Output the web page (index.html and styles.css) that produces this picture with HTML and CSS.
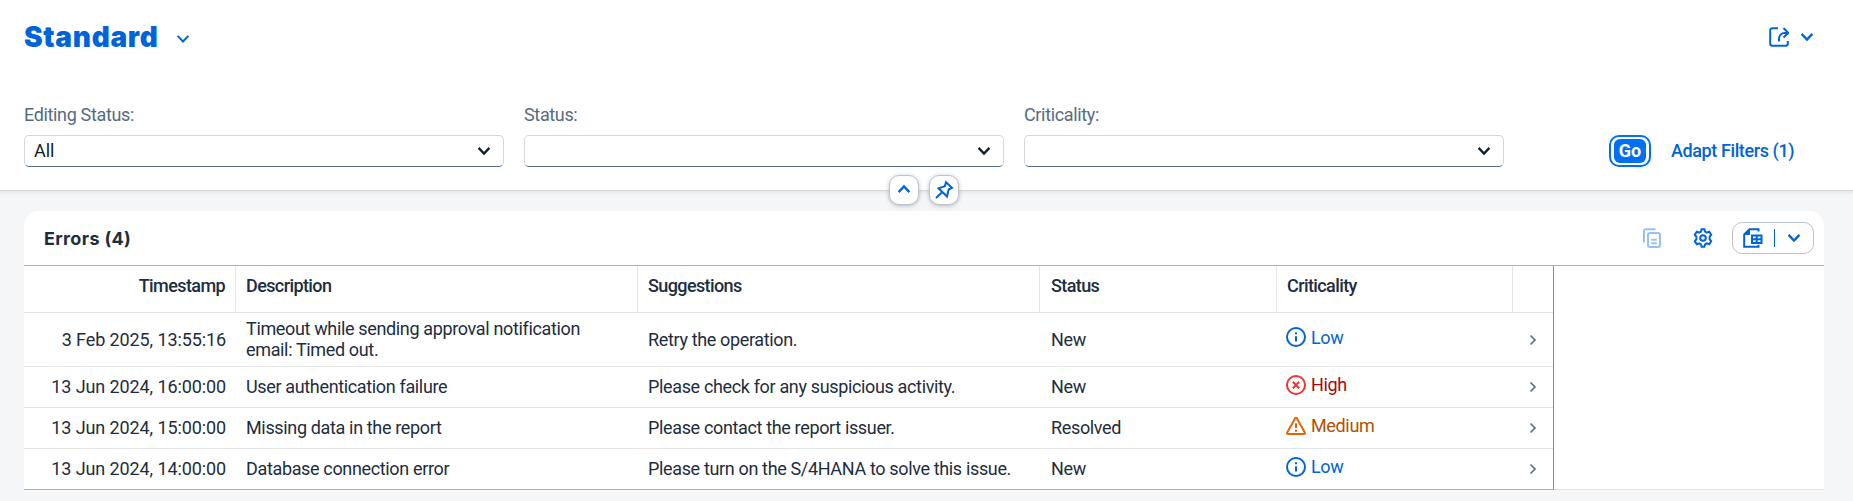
FILE: index.html
```html
<!DOCTYPE html>
<html lang="en">
<head>
<meta charset="utf-8">
<title>Errors</title>
<link rel="stylesheet" href="styles.css">
</head>
<body>
<svg class="defs" width="0" height="0">
  <symbol id="down" viewBox="0 0 14 10"><path d="M1.600 1.900L7 7.500l5.400-5.600"/></symbol>
  <symbol id="next" viewBox="0 0 8 12"><path d="M1.5 1.5L6 6l-4.5 4.5"/></symbol>
  <symbol id="info" viewBox="0 0 20 20"><circle cx="10" cy="10" r="9"/><path d="M10 9.3v5.2M10 5.2v2"/></symbol>
  <symbol id="error" viewBox="0 0 20 20"><circle cx="10" cy="10" r="9"/><path d="M6.800 6.800l6.400 6.400M13.200 6.800l-6.400 6.400"/></symbol>
  <symbol id="warning" viewBox="0 0 20 20"><path d="M9.200 2.200a1 1 0 0 1 1.600 0L18.800 16.500a1 1 0 0 1-.8 1.500H2a1 1 0 0 1-.8-1.500zM10 7.200v5M10 13.700v2"/></symbol>
</svg>
<header class="page-header">
  <div class="title-bar">
    <div class="variant"><h1 class="variant-name">Standard</h1><svg class="icon chevron thin"><use href="#down"/></svg></div>
    <div class="share">
      <svg class="icon i20" viewBox="0 0 20 20"><path d="M9 1.2H3.2a2 2 0 0 0-2 2v13.6a2 2 0 0 0 2 2h13.6a2 2 0 0 0 2-2V14M10 14.500v-3a5.5 5.5 0 0 1 5.5-5.5h3.2M14.5 1l4.8 5-4.8 4.4"/></svg>
      <svg class="icon chevron"><use href="#down"/></svg>
    </div>
  </div>
  <div class="filters">
    <div class="field"><label class="label">Editing Status:</label><div class="select"><span class="value">All</span><svg class="icon chevron"><use href="#down"/></svg></div></div>
    <div class="field"><label class="label">Status:</label><div class="select"><span></span><svg class="icon chevron"><use href="#down"/></svg></div></div>
    <div class="field"><label class="label">Criticality:</label><div class="select"><span></span><svg class="icon chevron"><use href="#down"/></svg></div></div>
    <div class="actions"><button class="go"><span class="go-inner">Go</span></button><button class="adapt">Adapt Filters (1)</button></div>
  </div>
  <div class="header-toggles">
    <button class="toggle"><svg class="icon chevron up"><use href="#down"/></svg></button>
    <button class="toggle"><svg class="icon i20" viewBox="0 0 20 20"><path d="M12 2.2l6 5.6-3.3 1.7-1.7 7L4.5 8.3l6.4-2.2zM8.3 12L2 18"/></svg></button>
  </div>
</header>
<main class="card">
  <div class="toolbar">
    <h2 class="table-title">Errors (4)</h2>
    <div class="tools">
      <svg class="icon i20 disabled" viewBox="0 0 20 20"><path d="M2 14.5V3.2a2 2 0 0 1 2-2h9.5"/><rect x="6" y="5" width="12" height="14" rx="2"/><path d="M9.2 11.8h5.6M9.2 15.2h5.6"/></svg>
      <svg class="icon i20 gear" viewBox="0 0 20 20"><path d="M8.600 1.200h2.800l.7 2.500 1.600.9 2.500-.9 2 3-1.600 2.100v2.400l1.600 2.100-2 3-2.500-.9-1.600.9-.7 2.500H8.600l-.7-2.500-1.600-.9-2.500.9-2-3 1.600-2.100V8.800L1.800 6.700l2-3 2.500.9 1.600-.9z"/><circle cx="10" cy="10" r="2.800"/></svg>
      <div class="export">
        <svg class="icon i20" viewBox="0 0 20 20"><path d="M15.500 3.500V1.200H6.500L1.200 6.500v12.300h14.300v-2"/><path class="corner" d="M7 1v6H1z"/><path d="M9 7.500h9.500v7.500H9zM13.700 7.500V15M9 11.200h9.500"/></svg>
        <span class="divider"></span>
        <svg class="icon chevron"><use href="#down"/></svg>
      </div>
    </div>
  </div>
  <div class="table-area">
    <div class="table">
      <div class="row head"><div class="cell end">Timestamp</div><div class="cell">Description</div><div class="cell">Suggestions</div><div class="cell">Status</div><div class="cell">Criticality</div><div class="cell"></div></div>
      <div class="row tall"><div class="cell end date">3 Feb 2025, 13:55:16</div><div class="cell"><span class="wrap">Timeout while sending approval notification<br>email: Timed out.</span></div><div class="cell">Retry the operation.</div><div class="cell">New</div><div class="cell crit low"><svg class="icon i20"><use href="#info"/></svg>Low</div><div class="cell nav"><svg class="next"><use href="#next"/></svg></div></div>
      <div class="row"><div class="cell end date">13 Jun 2024, 16:00:00</div><div class="cell">User authentication failure</div><div class="cell">Please check for any suspicious activity.</div><div class="cell">New</div><div class="cell crit high"><svg class="icon i20"><use href="#error"/></svg>High</div><div class="cell nav"><svg class="next"><use href="#next"/></svg></div></div>
      <div class="row"><div class="cell end date">13 Jun 2024, 15:00:00</div><div class="cell">Missing data in the report</div><div class="cell">Please contact the report issuer.</div><div class="cell">Resolved</div><div class="cell crit medium"><svg class="icon i20"><use href="#warning"/></svg>Medium</div><div class="cell nav"><svg class="next"><use href="#next"/></svg></div></div>
      <div class="row"><div class="cell end date">13 Jun 2024, 14:00:00</div><div class="cell">Database connection error</div><div class="cell">Please turn on the S/4HANA to solve this issue.</div><div class="cell">New</div><div class="cell crit low"><svg class="icon i20"><use href="#info"/></svg>Low</div><div class="cell nav"><svg class="next"><use href="#next"/></svg></div></div>
    </div>
  </div>
</main>
</body>
</html>
```
FILE: styles.css
```css
* { box-sizing: border-box; }
body {
  margin: 0;
  height: 501px;
  overflow: hidden;
  background: #f5f6f7;
  color: #1d2d3e;
  font: 18px/21px Roboto, "Liberation Sans", sans-serif;
  letter-spacing: -0.35px;
}
button { font: inherit; letter-spacing: inherit; padding: 0; margin: 0; border: 0; background: none; }
.defs { position: absolute; }
.icon { fill: none; stroke: currentColor; stroke-width: 2; flex: none; color: #0064d9; }
.chevron { width: 14px; height: 10px; stroke-width: 2.3; }
.thin { stroke-width: 2; }
.up { transform: rotate(180deg); }
.i20 { width: 20px; height: 20px; }

.page-header {
  position: relative;
  height: 191px;
  background: #fff;
  border-bottom: 1px solid #d9d9d9;
  box-shadow: 0 2px 3px rgba(34, 53, 72, 0.08);
  padding: 0 24px;
}
.title-bar { display: flex; justify-content: space-between; height: 104px; }
.variant { display: flex; align-items: flex-start; padding-top: 19px; }
.variant-name { width: 152px; margin: 0; font-family: Inter, Roboto, sans-serif; font-size: 28px; line-height: 36px; font-weight: 900; letter-spacing: 0.7px; color: #0064d9; }
.variant .chevron { margin-top: 15px; }
.share { display: flex; gap: 11px; padding: 27px 15px 0 0; }
.share .chevron { margin-top: 5px; }

.filters { display: flex; gap: 20px; }
.field { width: 480px; }
.label { display: block; height: 31px; color: #556b82; }
.select {
  display: flex;
  align-items: center;
  justify-content: space-between;
  height: 32px;
  padding: 0 12px 0 9px;
  border: 1px solid #d2d8de;
  border-bottom-color: #556b82;
  border-radius: 5px;
  background: #fff;
  color: #131e29;
}
.value { padding-bottom: 2px; letter-spacing: 0; }
.select .icon { color: #131e29; }
.actions { display: flex; align-items: center; gap: 20px; height: 32px; margin: 31px 0 0 85px; }
.go { width: 42px; height: 32px; padding: 2px; border: 2px solid #0070f2; border-radius: 10px; background: #fff; }
.go-inner { display: block; height: 24px; margin: 0 1px; border-radius: 6px; background: #0070f2; color: #fff; font-weight: 700; line-height: 23px; letter-spacing: 0; }
.adapt { padding-bottom: 2px; color: #0064d9; font-weight: 500; letter-spacing: -0.4px; }
.header-toggles { position: absolute; left: 889px; top: 175px; display: flex; gap: 10px; }
.toggle {
  display: flex;
  align-items: center;
  justify-content: center;
  width: 30px;
  height: 30px;
  border: 1px solid #bcc3ca;
  border-radius: 10px;
  background: #fff;
  box-shadow: 0 1px 4px rgba(34, 53, 72, 0.3);
}
.toggle .up { margin-bottom: 2px; }

.card { margin: 20px 29px 0 24px; border-radius: 15px 15px 0 0; background: #fff; }
.toolbar { display: flex; align-items: center; justify-content: space-between; height: 55px; padding: 0 10px 0 20px; border-bottom: 1px solid #a8b3bd; }
.table-title { margin: 0; font-family: Inter, Roboto, sans-serif; font-size: 18px; font-weight: 700; letter-spacing: 0.35px; }
.tools { display: flex; align-items: center; }
.disabled { opacity: 0.4; margin-right: 31px; }
.gear { margin-right: 19px; }
.export { display: flex; align-items: center; width: 82px; height: 32px; padding-left: 10px; border: 1px solid #bcc3ca; border-radius: 10px; }
.corner { fill: currentColor; stroke: none; }
.divider { width: 1px; height: 18px; margin: 0 12px 0 11px; background: #0064d9; }

.table-area { border-bottom: 1px solid #e5e5e5; height: 224px; }
.table { width: 1530px; height: 224px; border-right: 1px solid #8a8f94; }
.row { display: grid; grid-template-columns: 212px 402px 402px 237px 236px 41px; height: 41px; border-bottom: 1px solid #e5e5e5; }
.row:last-child { border-bottom-color: #a8b3bd; }
.tall { height: 54px; }
.head { height: 47px; font-weight: 500; letter-spacing: -0.6px; }
.cell { display: flex; align-items: center; padding: 0 10px 2px; white-space: nowrap; }
.tall .cell { padding-bottom: 0; }
.tall .cell:nth-child(2) { padding-bottom: 2px; }
.cell:nth-child(4) { padding-left: 11px; }
.date { letter-spacing: -0.1px; }
.head .cell { border-right: 1px solid #e5e5e5; padding-bottom: 8px; }
.head .cell:last-child { border-right: 0; }
.end { justify-content: flex-end; }
.row .crit { gap: 5px; padding: 0 0 5px 10px; }
.crit .icon { margin-left: -1px; }
.low { color: #0064d9; }
.high { color: #aa0808; }
.high .icon { color: #f53232; }
.medium { color: #b44f00; }
.medium .icon { color: #e76500; }
.row .nav { padding: 0 0 0 16px; }
.next { width: 8px; height: 12px; fill: none; stroke: #556b82; stroke-width: 1.6; }
```
